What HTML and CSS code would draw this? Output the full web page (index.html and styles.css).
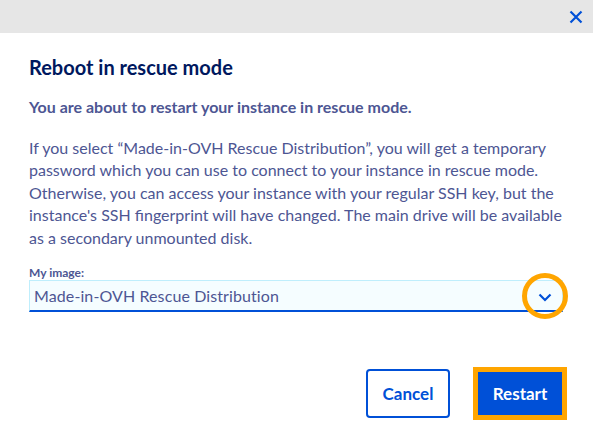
FILE: index.html
```html
<!DOCTYPE html>
<html lang="en">
<head>
    <meta charset="UTF-8">
    <meta name="viewport" content="width=device-width, initial-scale=1.0">
    <title>Reboot in rescue mode</title>
    <link rel="stylesheet" href="styles.css">
</head>
<body>
    <div class="modal">
        <div class="modal-top">
            <button class="close" aria-label="Close">
                <svg width="14" height="14" viewBox="0 0 14 14">
                    <path d="M1.5 1.5 L12.5 12.5 M12.5 1.5 L1.5 12.5" stroke="#0050d7" stroke-width="2.2" fill="none"/>
                </svg>
            </button>
        </div>

        <div class="modal-body">
            <h2 class="title">Reboot in rescue mode</h2>
            <p class="lead">You are about to restart your instance in rescue mode.</p>
            <p class="desc">If you select “Made-in-OVH Rescue Distribution”, you will get a temporary password which you can use to connect to your instance in rescue mode. Otherwise, you can access your instance with your regular SSH key, but the instance's SSH fingerprint will have changed. The main drive will be available as a secondary unmounted disk.</p>

            <label class="field-label">My image:</label>
            <div class="select">
                <span class="select-value">Made-in-OVH Rescue Distribution</span>
                <span class="chevron-ring">
                    <svg width="14" height="9" viewBox="0 0 14 9">
                        <path d="M1.5 1.5 L7 7 L12.5 1.5" stroke="#0050d7" stroke-width="2.2" fill="none"/>
                    </svg>
                </span>
            </div>
        </div>

        <div class="modal-footer">
            <button class="btn btn-secondary">Cancel</button>
            <button class="btn btn-primary">Restart</button>
        </div>
    </div>
</body>
</html>
```

FILE: styles.css
```css
body {
    margin: 0;
    background: #fff;
    font-family: Lato, "Open Sans", sans-serif;
    color: #4d5693;
}
.modal {
    width: 593px;
    height: 438px;
    display: flex;
    flex-direction: column;
}
.modal-top {
    height: 33px;
    background-color: #e6e6e6;
    display: flex;
    justify-content: flex-end;
    align-items: center;
    padding-right: 9px;
}
.close {
    border: none;
    background: none;
    padding: 0;
    width: 16px;
    height: 16px;
    display: flex;
    align-items: center;
    justify-content: center;
    cursor: pointer;
}
.modal-body {
    padding: 0 29px;
}
.title {
    margin: 21px 0 0;
    font-size: 20px;
    font-weight: 700;
    line-height: 26px;
    color: #00185e;
}
.lead {
    margin: 16px 0 0;
    font-size: 16px;
    font-weight: 700;
    line-height: 22px;
}
.desc {
    margin: 19px 0 0;
    font-size: 16px;
    line-height: 22.4px;
}
.field-label {
    display: block;
    margin-top: 17px;
    font-size: 12px;
    font-weight: 700;
    line-height: 14px;
}
.select {
    margin-top: 0;
    height: 29px;
    width: 532px;
    background-color: #f5fdff;
    border: 1px solid #bfeefc;
    border-bottom: 2px solid #0050d7;
    display: flex;
    align-items: center;
    justify-content: space-between;
}
.select-value {
    padding-left: 4px;
    font-size: 16px;
    letter-spacing: 0.1px;
}
.chevron-ring {
    box-sizing: border-box;
    width: 46px;
    height: 46px;
    border: 5px solid #ffa500;
    border-radius: 50%;
    margin: -8px -6px -8px 0;
    padding-top: 3px;
    display: flex;
    align-items: center;
    justify-content: center;
}
.modal-footer {
    margin-top: auto;
    padding: 0 31px 20px 0;
    display: flex;
    justify-content: flex-end;
    align-items: center;
    gap: 28px;
}
.btn {
    font-family: inherit;
    font-size: 17px;
    font-weight: 700;
    width: 84px;
    border-radius: 4px;
    cursor: pointer;
}
.btn-secondary {
    height: 49px;
    background: #fff;
    color: #0050d7;
    border: 2px solid #0050d7;
}
.btn-primary {
    height: 43px;
    background: #0050d7;
    color: #fff;
    border: none;
    border-radius: 0;
    outline: 5px solid #ffa500;
}
```
